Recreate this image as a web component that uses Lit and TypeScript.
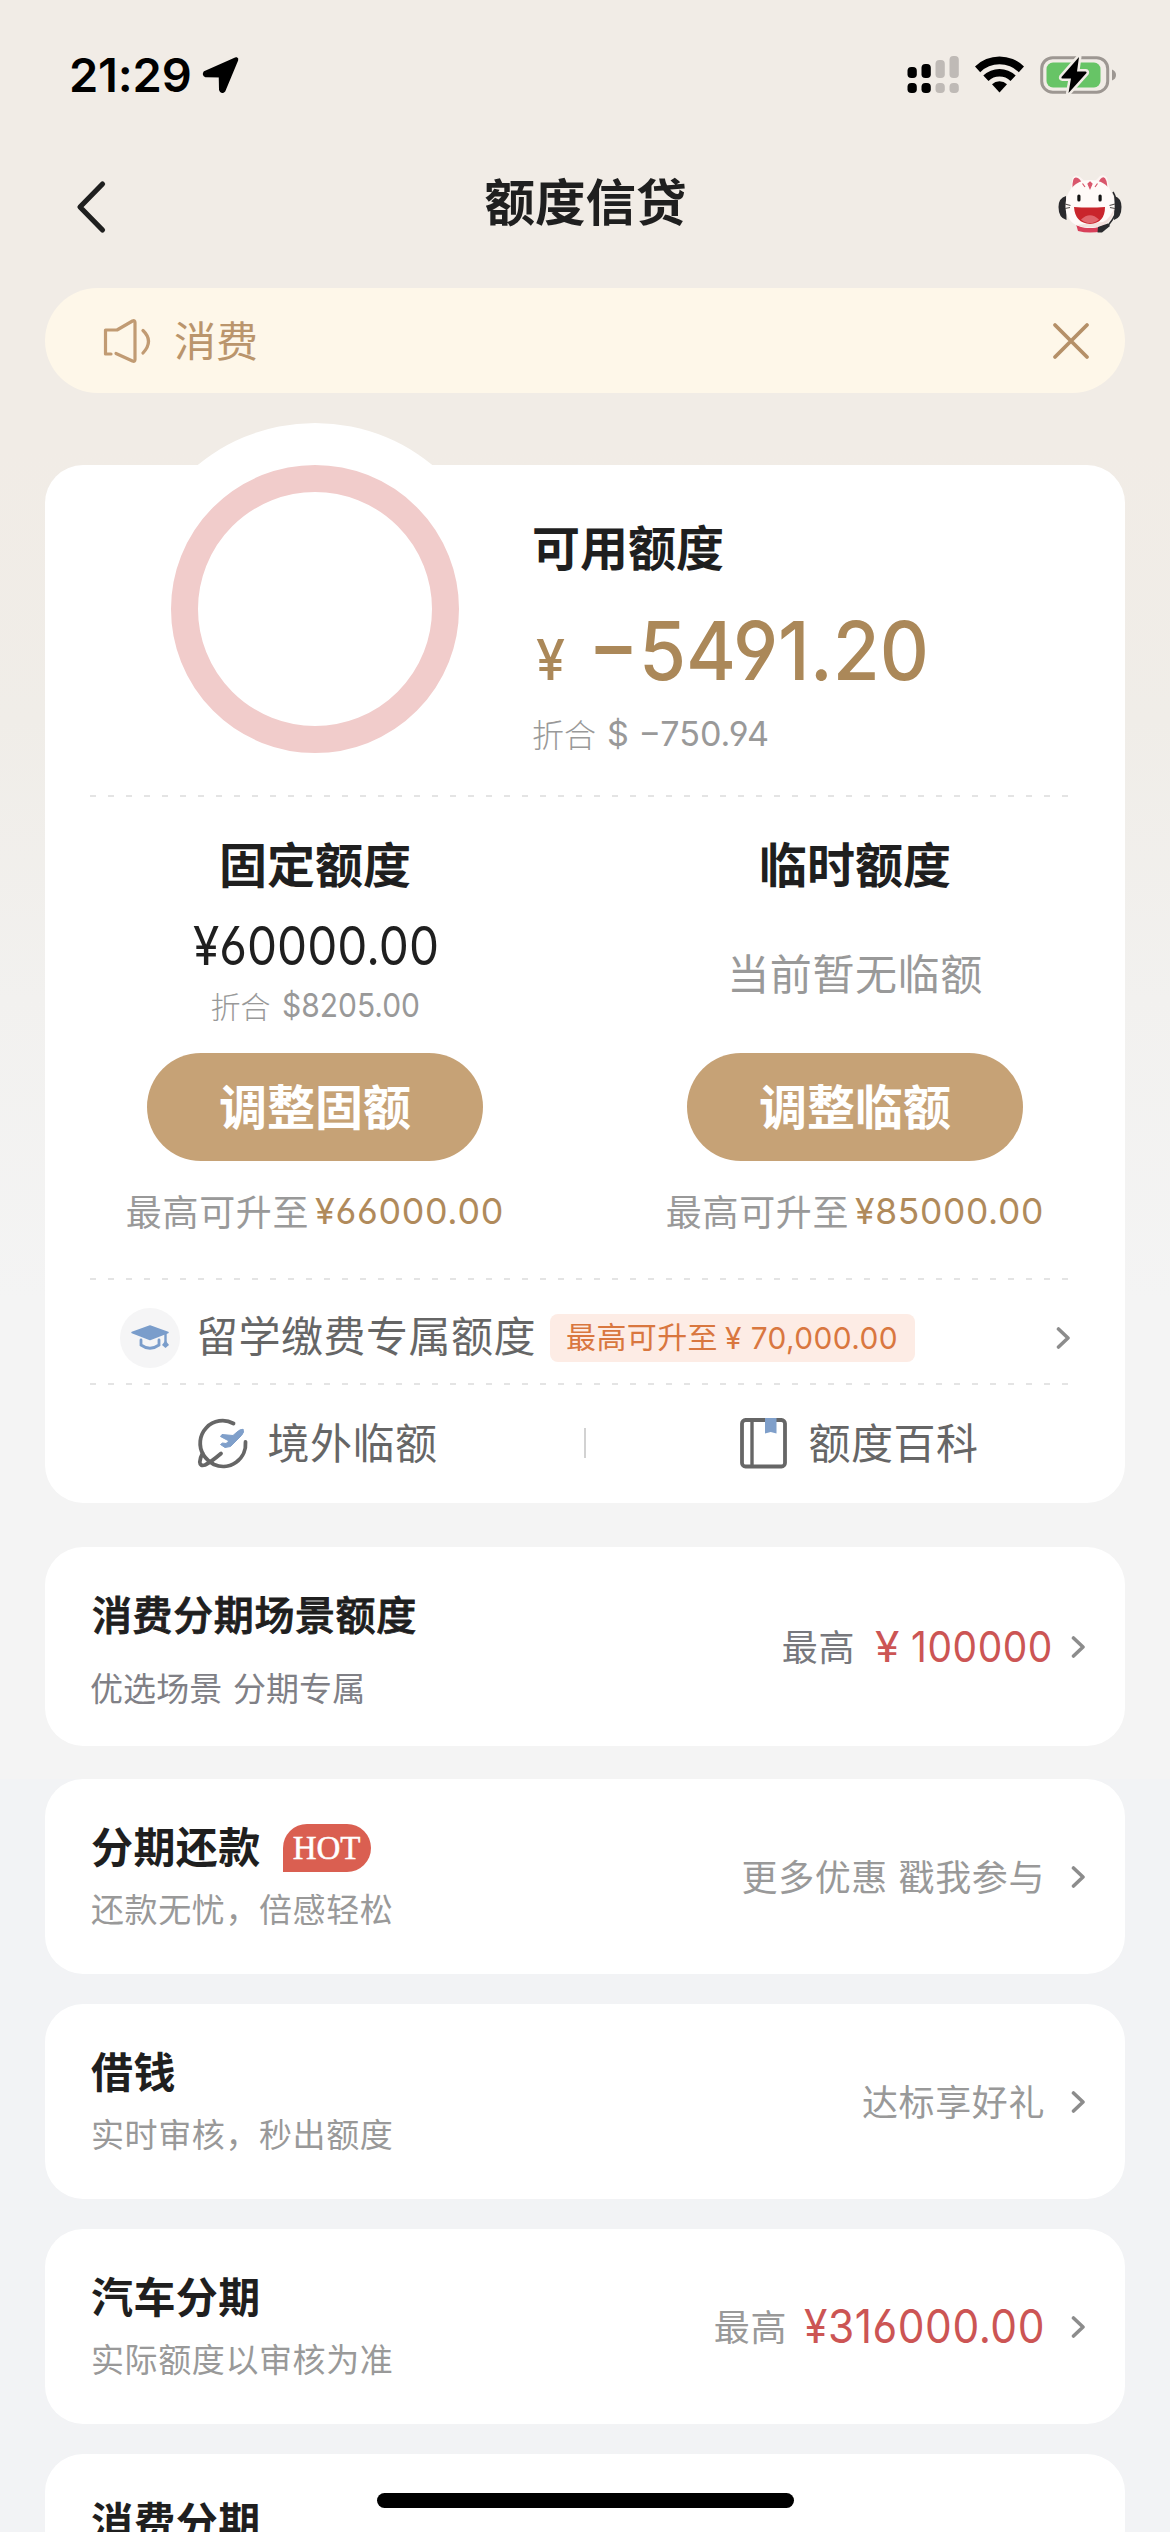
import { LitElement, html, css, svg, nothing } from "lit";
import { customElement, property } from "lit/decorators.js";

/** A figure set to a fixed measure: the glyphs are condensed to fill `w` pixels. */
@customElement("amount-text")
class AmountText extends LitElement {
  @property() text = "";
  @property({ type: Number }) w = 100;
  @property({ type: Number }) size = 36;

  static styles = css`
    :host { display: block; flex: none; }
    svg { display: block; overflow: visible; }
    text {
      font-family: Inter, Roboto, sans-serif;
      font-feature-settings: "cv03", "cv04";
      fill: currentColor;
    }
  `;

  render() {
    const cap = this.size * 0.727;
    return html`<svg width=${this.w} height=${cap}>
      <text x="0" y=${cap} font-size=${this.size} textLength=${this.w} lengthAdjust="spacingAndGlyphs">${this.text}</text>
    </svg>`;
  }
}

@customElement("chevron-icon")
class ChevronIcon extends LitElement {
  static styles = css`
    :host { display: block; flex: none; width: 15px; height: 22px; }
    svg { display: block; }
  `;
  render() {
    return html`<svg width="15" height="22" viewBox="0 0 15 22" fill="none" stroke="#8c8c8c" stroke-width="3.600" stroke-linecap="round" stroke-linejoin="round">
      <path d="M2.500 2 L12 11 L2.500 20" />
    </svg>`;
  }
}

@customElement("status-bar")
class StatusBar extends LitElement {
  static styles = css`
    :host { display: flex; align-items: center; height: 149px; box-sizing: border-box; padding: 0 53px 0 69px; }
    .time { font: 600 47px/60px Inter, sans-serif; letter-spacing: -0.2px; color: #000; width: 123px; white-space: nowrap; }
    .arrow { margin-left: 10px; }
    .icons { margin-left: auto; display: flex; align-items: center; gap: 16px; }
    svg { display: block; }
  `;

  private signal() {
    const bars = [
      { x: 0, top: 11, on: true },
      { x: 14, top: 8, on: true },
      { x: 28, top: 4, on: false },
      { x: 42, top: 0, on: false },
    ];
    return html`<svg width="52" height="38" viewBox="0 0 52 38">
      ${bars.map((b) => svg`
        <g fill=${b.on ? "#000" : "#bfbab6"}>
          <rect x=${b.x + 0.5} y=${b.top} width="9.300" height=${22 - b.top} rx="3.800" />
          <rect x=${b.x + 0.5} y="27" width="9.300" height="10" rx="3.800" />
        </g>`)}
    </svg>`;
  }

  render() {
    return html`
      <div class="time">21:29</div>
      <svg class="arrow" width="38" height="38" viewBox="0 0 38 38">
        <path d="M34 3.500 L3.500 17 Q2.500 18.600 4 19 L19 19.300 L19.300 33.500 Q20 35.500 21.300 34.200 Z" stroke="#000" stroke-width="4.600" stroke-linejoin="round" />
      </svg>
      <div class="icons">
        ${this.signal()}
        <svg width="49" height="38" viewBox="0 0 49 38">
          <path d="M0 10.500 A35 35 0 0 1 49 10.500 L43.800 16.200 A27.500 27.500 0 0 0 5.200 16.200 Z" />
          <path d="M8.300 19.500 A23.500 23.500 0 0 1 40.700 19.500 L35.500 25 A16 16 0 0 0 13.500 25 Z" />
          <path d="M17 28.300 A11 11 0 0 1 32 28.300 L24.500 36.500 Z" />
        </svg>
        <svg width="77" height="40" viewBox="0 0 77 40">
          <rect x="1.700" y="2.700" width="66" height="34.500" rx="11" fill="none" stroke="#9d9792" stroke-width="3" />
          <rect x="6.500" y="7.500" width="54" height="25" rx="6.500" fill="#67c466" />
          <path d="M72 14.500 Q76 16 76 20 Q76 24 72 25.500 Z" fill="#9d9792" />
          <path d="M39 2 L21.500 22 Q21 23.500 22.500 23.500 H31 L28.500 38 L46.500 18 Q47 16.500 45.500 16.500 H37 Z" stroke="#f1ece6" stroke-width="5" stroke-linejoin="round" />
          <path d="M39 2 L21.500 22 Q21 23.500 22.500 23.500 H31 L28.500 38 L46.500 18 Q47 16.500 45.500 16.500 H37 Z" />
        </svg>
      </div>
    `;
  }
}

@customElement("nav-header")
class NavHeader extends LitElement {
  static styles = css`
    :host { display: grid; grid-template-columns: 1fr auto 1fr; align-items: center; height: 139px; box-sizing: border-box; padding: 0 47px 30px 74px; }
    .title { font: 600 50.500px/60px "Noto Sans CJK SC", sans-serif; color: #1f1f1f; margin: -10px 0 0 -26px; }
    .cat { justify-self: end; margin-top: 1px; }
    svg { display: block; margin-top: 6px; }
  `;
  render() {
    return html`
      <svg width="34" height="56" viewBox="0 0 34 56" fill="none" stroke="#1f1f1f" stroke-width="5.200" stroke-linecap="round" stroke-linejoin="round">
        <path d="M28.500 5 L6 28 L28.500 51" />
      </svg>
      <div class="title">额度信贷</div>
      <svg class="cat" width="66" height="60" viewBox="0 0 66 60">
        <path d="M13 20 L15.500 4 Q18 -0.500 23 3 L29 8 H37 L43 2 Q48 0 50 4 L54 20 Z" fill="#fdf5f3" />
        <path d="M15.500 15 Q15 3 19 3.500 Q23 4 25 9.500 Z M41 9.500 Q43 3.500 46.500 3.200 Q50 4 50.500 15 Z" fill="#d9566c" />
        <path d="M9 22 Q1.500 24 1.500 33 Q1.500 44 9.500 46 Z M57.500 22 Q64.500 24 64.500 33 Q64.500 44 57 46 Z" fill="#2a2a2d" />
        <path d="M19 50 H48 L45 57 Q33 60 21 57 Z" fill="#d8405a" />
        <path d="M33 6 C50 6 57 18 57.500 31 C58 46 48 54 33 54 C18 54 8 46 8.500 31 C9 18 17 6 33 6 Z" fill="#fffaf8" />
        <path d="M19 51 Q33 56 47 51 Q57 45 57.500 33 Q54 44 46 48 Z" fill="#f3e1dd" />
        <path d="M33 8 L35 10 L33 14.500 L31 10 Z M25.500 9.500 L28 13 M40.500 9.500 L38 13" fill="#d9566c" stroke="#d9566c" stroke-width="1.200" />
        <rect x="20.300" y="20.500" width="3.200" height="7" rx="1.500" fill="#161616" />
        <rect x="41.500" y="20.500" width="3.200" height="7" rx="1.500" fill="#161616" />
        <path d="M8 30 L13.500 31.500 M8 34.500 L13 33.500 M58 30 L52.500 31.500 M58 34.500 L53 33.500" stroke="#55504f" stroke-width="1.200" />
        <path d="M17 33 Q32 34 48 33 Q48 49 33 50 Q18 49 17 33 Z" fill="#c9252c" />
        <path d="M24 45.500 Q33 37 42 45.500 Q33 53 24 45.500 Z" fill="#e0666d" />
        <path d="M56 18 Q60 24 59.500 38 Q56 46 50 53" stroke="#2a2a2d" stroke-width="1.600" fill="none" />
        <path d="M41 53 L51 49.500 L53 52 L45 58.500 L40.500 58.500 Z" fill="#2a2a2d" />
      </svg>
    `;
  }
}

@customElement("notice-bar")
class NoticeBar extends LitElement {
  static styles = css`
    :host { display: flex; align-items: center; height: 105px; box-sizing: border-box; margin: 0 45px; padding: 0 35px 0 56px; border-radius: 53px; background: #fef7e9; color: #ba956c; }
    .text { font: 400 42px/60px "Noto Sans CJK SC", sans-serif; margin: -4px auto 0 21px; }
    svg { display: block; }
  `;
  render() {
    return html`
      <svg width="52" height="50" viewBox="0 0 52 50" fill="none" stroke="#c19b73" stroke-width="3.200" stroke-linecap="round" stroke-linejoin="round">
        <path d="M10 38 H4.500 V14 H16 L31.500 5 Q34 4 34 6.500 V43.500 Q34 46 31.500 45 L15 37.500" />
        <path d="M42 14.500 Q53 25 42 37" />
      </svg>
      <div class="text">消费</div>
      <svg width="38" height="38" viewBox="0 0 38 38" stroke="#b59068" stroke-width="3.800" stroke-linecap="round">
        <path d="M3 3 L35 35 M35 3 L3 35" />
      </svg>
    `;
  }
}

@customElement("quota-card")
class QuotaCard extends LitElement {
  static styles = css`
    :host { display: block; position: relative; box-sizing: border-box; height: 1038px; margin: 72px 45px 0; border-radius: 38px; background: #fff; font-family: "Noto Sans CJK SC", sans-serif; color: #1f1f1f; }
    /* White bulge behind the ring, rising over the top edge of the card. */
    .halo { position: absolute; left: 85px; top: -42px; width: 370px; height: 370px; border-radius: 50%; background: #fff; }
    .summary { position: relative; display: flex; height: 330px; padding-left: 126px; }
    .ring { box-sizing: border-box; flex: none; width: 288px; height: 288px; border: 27px solid #f1cccb; border-radius: 50%; }
    .avail { padding: 50px 0 0 73px; }
    .h { font-size: 48px; line-height: 60px; font-weight: 600; white-space: nowrap; }
    .big { display: flex; align-items: flex-end; gap: 23px; height: 105px; color: #ab8859; padding-left: 4px; font-weight: 500; }
    .big .sum { font-weight: 550; }
    .conv { display: flex; align-items: center; gap: 11px; color: #999; font-weight: 300; font-size: 32px; line-height: 40px; white-space: nowrap; }
    .conv amount-text { font-weight: 400; }
    .avail .conv { margin-top: 33px; }
    .rule { height: 2px; margin: 0 57px 0 45px; background: repeating-linear-gradient(90deg, #e4e4e4 0 6px, transparent 6px 18px); }
    .cols { display: grid; grid-template-columns: 1fr 1fr; height: 481px; }
    .col { display: flex; flex-direction: column; align-items: center; padding-top: 35px; }
    .mid { display: flex; flex-direction: column; align-items: center; height: 161px; }
    .fixed { margin: 34px 0 0 2px; }
    .mid .conv { margin-top: 20px; font-size: 30px; }
    .none { margin-top: 47px; font-size: 42px; line-height: 66px; letter-spacing: 0.6px; color: #999; }
    .btn { display: flex; justify-content: center; width: 336px; height: 108px; border-radius: 54px; background: #c6a276; color: #fff; font-size: 48px; font-weight: 600; line-height: 103px; white-space: nowrap; }
    .upto { display: flex; align-items: center; gap: 6px; margin-top: 25px; font-size: 36px; line-height: 48px; color: #999; letter-spacing: 0.7px; white-space: nowrap; }
    .upto amount-text { color: #b08a5b; margin-top: 3px; }
    .study { display: flex; align-items: center; height: 103px; padding: 13px 54px 0 75px; box-sizing: border-box; color: #666; font-size: 42px; line-height: 60px; white-space: nowrap; }
    .disc { display: flex; align-items: center; justify-content: center; width: 60px; height: 60px; border-radius: 50%; background: #f5f5f6; }
    .study .name { margin: -8px 14px 0 16px; letter-spacing: 0.5px; }
    .tag { display: flex; align-items: center; gap: 7px; height: 48px; width: 365px; box-sizing: border-box; padding-left: 16px; border-radius: 8px; background: #fdece5; color: #d9773f; font-size: 30px; letter-spacing: 0.4px; }
    .tag span { margin-top: -6px; }
    .study chevron-icon { margin-left: auto; }
    .links { display: grid; grid-template-columns: 1fr 2px 1fr; align-items: center; height: 116px; color: #666; font-size: 42px; line-height: 60px; }
    .link { display: flex; align-items: center; gap: 18px; letter-spacing: 0.5px; justify-content: center; padding-left: 6px; }
    .link span { margin-top: -5px; }
    .bar { height: 30px; background: #d2d2d2; }
    svg { display: block; }
  `;

  private column(title: string, mid: unknown, action: string, limit: string) {
    return html`<div class="col">
      <div class="h">${title}</div>
      <div class="mid">${mid}</div>
      <div class="btn">${action}</div>
      <div class="upto">最高可升至<amount-text .text=${limit} .w=${189} .size=${36}></amount-text></div>
    </div>`;
  }

  render() {
    return html`
      <div class="halo"></div>
      <div class="summary">
        <div class="ring"></div>
        <div class="avail">
          <div class="h">可用额度</div>
          <div class="big">
            <amount-text text="¥" .w=${29} .size=${56}></amount-text>
            <amount-text class="sum" text="−5491.20" .w=${341} .size=${81}></amount-text>
          </div>
          <div class="conv">折合<amount-text text="$ −750.94" .w=${162} .size=${34}></amount-text></div>
        </div>
      </div>
      <div class="rule"></div>
      <div class="cols">
        ${this.column(
          "固定额度",
          html`<amount-text class="fixed" text="¥60000.00" .w=${246} .size=${53}></amount-text>
            <div class="conv">折合<amount-text text="$8205.00" .w=${138} .size=${33}></amount-text></div>`,
          "调整固额",
          "¥66000.00"
        )}
        ${this.column("临时额度", html`<div class="none">当前暂无临额</div>`, "调整临额", "¥85000.00")}
      </div>
      <div class="rule"></div>
      <div class="study">
        <div class="disc">
          <svg width="40" height="26" viewBox="0 0 40 26">
            <path d="M20 1 L38 7.500 L20 14.500 L2 7.500 Z" fill="#7a9dcb" stroke="#7a9dcb" stroke-width="1.500" stroke-linejoin="round" />
            <path d="M11 15 V20 Q20 26.500 29 20 V15" fill="none" stroke="#7a9dcb" stroke-width="2.800" stroke-linecap="round" />
            <path d="M35.500 8 V18" stroke="#7a9dcb" stroke-width="2.400" />
            <path d="M35.500 15.500 L39 20 L35.500 23 L32 20 Z" fill="#7a9dcb" />
          </svg>
        </div>
        <span class="name">留学缴费专属额度</span>
        <div class="tag"><span>最高可升至</span><amount-text text="¥ 70,000.00" .w=${173} .size=${30}></amount-text></div>
        <chevron-icon></chevron-icon>
      </div>
      <div class="rule"></div>
      <div class="links">
        <div class="link">
          <svg width="52" height="52" viewBox="0 0 52 52" fill="none" stroke="#666" stroke-width="3.800" stroke-linecap="round" stroke-linejoin="round">
            <path d="M36.500 6.500 A22.500 22.500 0 0 0 6.500 38 Q10 43.500 17 47.500 A22.500 22.500 0 0 0 48.500 25" />
            <path d="M5.500 36.500 Q3 41 2.800 45 Q3 49.500 8 48 Q14 45 24 36.500" />
            <path d="M46 12.500 Q43.500 11.500 40 15 L36 18.500 L25 17.500 L23.500 19.500 L32 24 L29 26.500 L25.500 26 L23.500 27.500 L28 30.500 L33.500 29.500 L44.500 18.500 Q48 14.500 46 12.500 Z" fill="#7f9fca" stroke="#7f9fca" stroke-width="1" />
          </svg>
          <span>境外临额</span>
        </div>
        <div class="bar"></div>
        <div class="link">
          <svg width="52" height="52" viewBox="0 0 52 52" fill="none" stroke="#666" stroke-width="3.800">
            <rect x="4" y="3" width="43" height="46.500" rx="3.500" />
            <path d="M14 3 V49" stroke-width="3.400" />
            <path d="M27 1 H38.500 V16.500 L32.700 15 L27 16.500 Z" fill="#7f9fca" stroke="none" />
          </svg>
          <span>额度百科</span>
        </div>
      </div>
    `;
  }
}

interface Product {
  title: string;
  note: string;
  hot?: boolean;
  hint?: string;
  amount?: { text: string; w: number; size: number };
  tall?: boolean;
}

@customElement("product-card")
class ProductCard extends LitElement {
  @property({ attribute: false }) item!: Product;

  static styles = css`
    :host { display: block; margin: 0 45px; font-family: "Noto Sans CJK SC", sans-serif; }
    .card { display: flex; align-items: center; justify-content: space-between; box-sizing: border-box; height: 195px; padding: 0 39px 0 46px; border-radius: 38px; background: #fff; }
    .card.tall { height: 199px; }
    .left { align-self: flex-start; padding-top: 36px; }
    .title { display: flex; align-items: center; height: 60px; gap: 22px; font-size: 42px; line-height: 60px; font-weight: 600; letter-spacing: 0.4px; color: #1f1f1f; white-space: nowrap; }
    .note { margin-top: 11px; font-size: 33px; line-height: 44px; letter-spacing: 0.6px; color: #999; white-space: nowrap; }
    .tall .title { font-size: 40px; font-weight: 500; -webkit-text-stroke: 0.9px #1f1f1f; letter-spacing: 0.6px; padding-left: 1px; }
    .tall .note { margin: 22px 0 0 -1px; letter-spacing: 0.1px; word-spacing: 3px; color: #808086; }
    .hot { width: 88px; height: 48px; border-radius: 24px 24px 24px 0; background: #da5f51; color: #fff; font: 400 33px/48px "Liberation Serif", serif; -webkit-text-stroke: 0.5px #fff; letter-spacing: 0; text-align: center; margin-top: 5px; }
    .right { display: flex; align-items: center; font-size: 36px; line-height: 48px; letter-spacing: 0.6px; word-spacing: 2px; color: #999; white-space: nowrap; }
    .right span { margin-top: -4px; }
    .tall .right { color: #77787d; }
    .right chevron-icon { margin-left: 26px; }
    .right amount-text { margin-left: 17px; color: #cc5554; }
    .right .yen { margin: 0 -6px 0 20px; }
    .tall chevron-icon { margin-left: 18px; }
  `;

  render() {
    const { title, note, hot, hint, amount, tall } = this.item;
    return html`<div class="card ${tall ? "tall" : ""}">
      <div class="left">
        <div class="title">${title}${hot ? html`<div class="hot">HOT</div>` : nothing}</div>
        <div class="note">${note}</div>
      </div>
      <div class="right">
        ${hint ? html`<span>${hint}</span>` : nothing}
        ${tall ? html`<amount-text class="yen" text="¥" .w=${25} .size=${42}></amount-text>` : nothing}
        ${amount ? html`<amount-text .text=${amount.text} .w=${amount.w} .size=${amount.size}></amount-text>` : nothing}
        <chevron-icon></chevron-icon>
      </div>
    </div>`;
  }
}

@customElement("app-root")
class AppRoot extends LitElement {
  static styles = css`
    :host { display: block; position: relative; width: 1170px; height: 2532px; overflow: hidden; background: linear-gradient(#f1ece6 0, #f1ece6 450px, #f0ede8 720px, #f2f1ef 1000px, #f4f4f4 1300px, #f4f4f4 1779px, #f2f3f5 1779px); }
    .first { margin-top: 44px; }
    .list { display: flex; flex-direction: column; gap: 30px; margin-top: 33px; }
    /* System home indicator, floating over the scrolling page. */
    .home { position: absolute; left: 377px; top: 2493px; width: 417px; height: 15px; border-radius: 8px; background: #000; }
  `;

  private readonly scene: Product = {
    title: "消费分期场景额度",
    note: "优选场景 分期专属",
    hint: "最高",
    amount: { text: "100000", w: 142, size: 42 },
    tall: true,
  };

  private readonly products: Product[] = [
    { title: "分期还款", note: "还款无忧，倍感轻松", hot: true, hint: "更多优惠 戳我参与" },
    { title: "借钱", note: "实时审核，秒出额度", hint: "达标享好礼" },
    { title: "汽车分期", note: "实际额度以审核为准", hint: "最高", amount: { text: "¥316000.00", w: 241, size: 46 } },
    { title: "消费分期", note: "" },
  ];

  render() {
    return html`
      <status-bar></status-bar>
      <nav-header></nav-header>
      <notice-bar></notice-bar>
      <quota-card></quota-card>
      <product-card class="first" .item=${this.scene}></product-card>
      <div class="list">${this.products.map((p) => html`<product-card .item=${p}></product-card>`)}</div>
      <div class="home"></div>
    `;
  }
}
